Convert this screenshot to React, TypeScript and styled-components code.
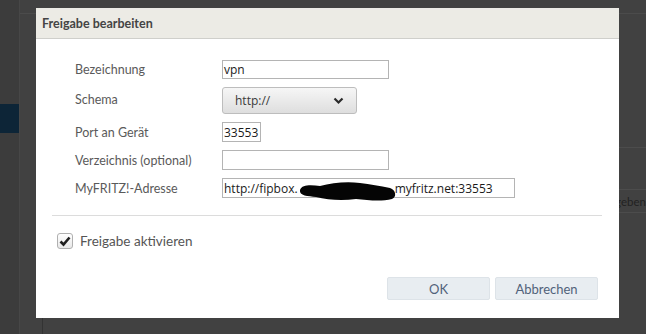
import styled, { createGlobalStyle } from 'styled-components';

const GlobalStyle = createGlobalStyle`
  html, body {
    margin: 0;
    padding: 0;
    width: 646px;
    height: 334px;
    overflow: hidden;
    background: #414141;
  }
  * {
    box-sizing: border-box;
  }
`;

const labelFont = `'Lato', 'Noto Sans', sans-serif`;
const fieldFont = `'Open Sans', 'Noto Sans', sans-serif`;

const Page = styled.div`
  position: relative;
  width: 646px;
  height: 334px;
  display: flex;
  background: #414141;
  font-family: ${labelFont};
`;

const Sidebar = styled.div`
  width: 37px;
  height: 100%;
  background: #3c3c3c;
  border-right: 1px solid #474747;
  display: flex;
  flex-direction: column;
  padding-top: 104px;
`;

const NavItem = styled.div<{ active?: boolean }>`
  height: 29px;
  background: ${({ active }) => (active ? '#0d2537' : 'transparent')};
`;

const Main = styled.div`
  flex: 1;
  display: flex;
  flex-direction: column;
`;

const TopBar = styled.div`
  height: 14px;
  border-bottom: 1px solid #4b4b4b;
  flex-shrink: 0;
`;

const Card = styled.div`
  flex: 1;
  margin-left: 22px;
  border-left: 1px solid #333;
  display: flex;
  flex-direction: column;
  padding-top: 133px;
`;

const CardRow = styled.div<{ h: number }>`
  height: ${({ h }) => h}px;
  border-top: 1px solid #4c4c4c;
  display: flex;
  align-items: center;
  padding-left: 555px;
  white-space: nowrap;
  font-size: 11.5px;
  color: #222;
`;

const Counter = styled.div`
  padding: 17px 0 0 549px;
  font-size: 14px;
  color: #222;
`;

/* dialog */

const Dialog = styled.div`
  position: absolute;
  left: 36px;
  top: 8px;
  width: 583px;
  height: 310px;
  background: #fff;
  display: flex;
  flex-direction: column;
`;

const DialogHeader = styled.div`
  height: 31px;
  background: #ecebe5;
  border-bottom: 1px solid #cfcfcb;
  display: flex;
  align-items: center;
  padding-left: 6px;
  font-family: ${labelFont};
  font-weight: 700;
  font-size: 12.5px;
  color: #444;
`;

const Body = styled.div`
  flex: 1;
  display: flex;
  flex-direction: column;
  padding: 21px 17px 18px 16px;
`;

const Form = styled.div`
  display: grid;
  grid-template-columns: 147px auto;
  row-gap: 8px;
  padding-left: 23px;
  align-items: center;
  justify-items: start;
`;

const Label = styled.div<{ raise?: number }>`
  font-family: ${labelFont};
  font-size: 12.5px;
  color: #5a5a5a;
  margin-top: ${({ raise }) => (raise ? -raise * 2 : 0)}px;
`;

const TextField = styled.div<{ w: number; h?: number }>`
  width: ${({ w }) => w}px;
  height: ${({ h }) => h ?? 20}px;
  border: 1px solid #b4b4b4;
  background: #fff;
  font-family: ${fieldFont};
  font-size: 12px;
  color: #1a1a1a;
  display: flex;
  align-items: center;
  padding-left: 1px;
  white-space: nowrap;
`;

const Select = styled.div`
  width: 135px;
  height: 27px;
  border: 1px solid #bdbdbd;
  border-radius: 3px;
  background: linear-gradient(#f6f6f6, #dedede);
  display: flex;
  align-items: center;
  justify-content: space-between;
  padding: 0 12px 0 12px;
  font-family: ${fieldFont};
  font-size: 12px;
  color: #3a3a3a;
`;

const Blob = styled.svg`
  flex-shrink: 0;
  margin: 3px -2px -3px 0;
`;

const Divider = styled.div`
  height: 1px;
  background: #dcdcdc;
  margin-top: 17px;
`;

const CheckRow = styled.label`
  display: flex;
  align-items: center;
  gap: 7px;
  margin: 17px 0 0 5px;
  font-family: ${labelFont};
  font-size: 13.5px;
  color: #555;
`;

const CheckBox = styled.span`
  width: 16px;
  height: 16px;
  border: 1px solid #b0b0b0;
  border-radius: 3px;
  background: linear-gradient(#ffffff, #e8e8e8);
  display: flex;
  align-items: center;
  justify-content: center;
`;

const Actions = styled.div`
  margin-top: auto;
  display: flex;
  justify-content: flex-end;
  gap: 5px;
  padding-right: 4px;
`;

const Button = styled.button`
  width: 103px;
  height: 23px;
  border: 1px solid #dde3e8;
  border-radius: 2px;
  background: #e8edf1;
  font-family: ${labelFont};
  font-size: 13px;
  color: #51627a;
  padding: 0;
`;

const App = () => {
  return (
    <>
      <GlobalStyle />
      <Page>
        <Sidebar>
          <NavItem active />
        </Sidebar>
        <Main>
          <TopBar />
          <Card>
            <CardRow h={42} />
            <CardRow h={23}>Vergeben</CardRow>
            <CardRow h={1} />
            <Counter>(0)</Counter>
          </Card>
        </Main>

        <Dialog>
          <DialogHeader>Freigabe bearbeiten</DialogHeader>
          <Body>
            <Form>
              <Label>Bezeichnung</Label>
              <TextField w={167} h={19}>vpn</TextField>

              <Label raise={1}>Schema</Label>
              <Select>
                <span>http://</span>
                <svg width="11" height="8" viewBox="0 0 11 8">
                  <path d="M1.5 1.5 L5.5 5.5 L9.5 1.5" fill="none" stroke="#2b2b2b" strokeWidth="2.2" />
                </svg>
              </Select>

              <Label>Port an Gerät</Label>
              <TextField w={39}>33553</TextField>

              <Label>Verzeichnis (optional)</Label>
              <TextField w={167} />

              <Label>MyFRITZ!-Adresse</Label>
              <TextField w={293}>
                http://fipbox.
                <Blob width="99" height="22" viewBox="0 0 99 22">
                  <path
                    d="M2 10 C4 4 14 5 22 6 C34 3 48 1 62 3 C72 4 82 6 92 8 C98 10 99 17 94 19 C82 22 70 20 58 19 C44 21 30 20 18 17 C10 16 1 16 2 10 Z"
                    fill="#050505"
                  />
                </Blob>
                myfritz.net:33553
              </TextField>
            </Form>

            <Divider />

            <CheckRow>
              <CheckBox>
                <svg width="12" height="11" viewBox="0 0 12 11">
                  <path d="M1.5 5.5 L4.5 8.5 L10.5 1.5" fill="none" stroke="#1f1f1f" strokeWidth="2.6" />
                </svg>
              </CheckBox>
              Freigabe aktivieren
            </CheckRow>

            <Actions>
              <Button>OK</Button>
              <Button>Abbrechen</Button>
            </Actions>
          </Body>
        </Dialog>
      </Page>
    </>
  );
};

export default App;
